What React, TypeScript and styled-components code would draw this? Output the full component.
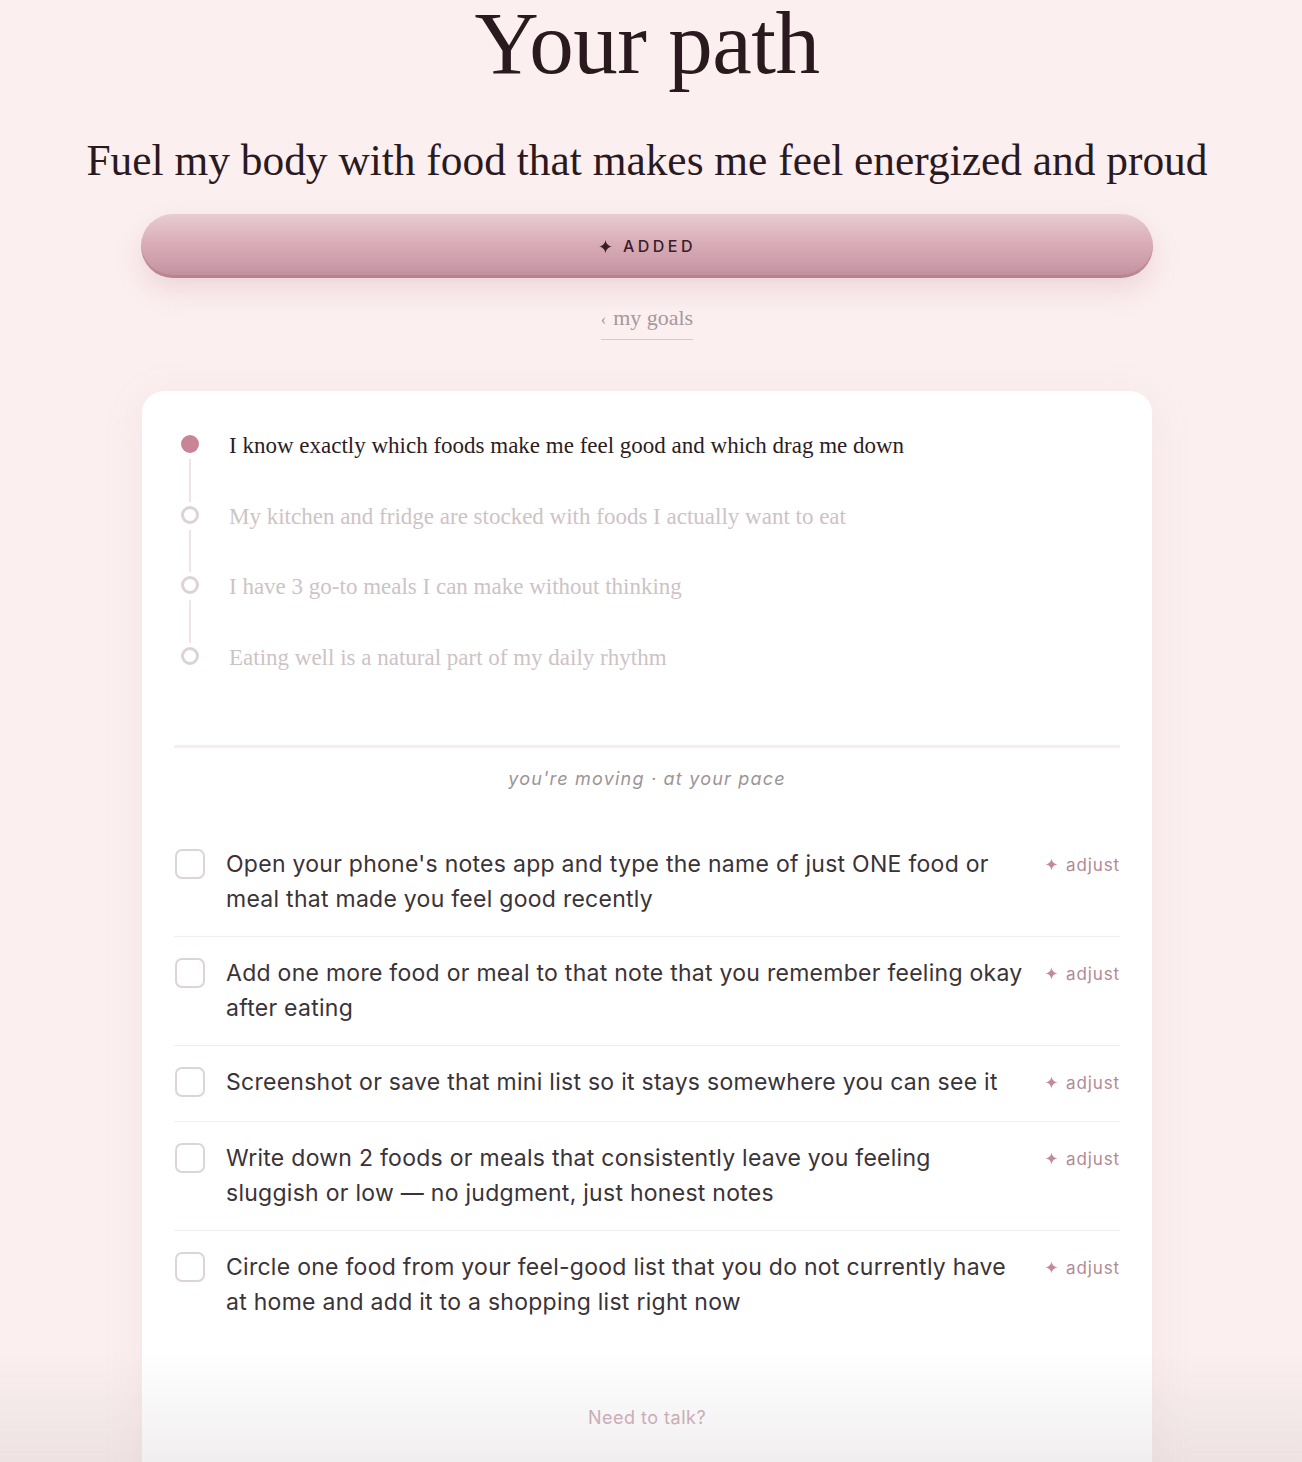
import styled, { createGlobalStyle } from 'styled-components'

const GlobalStyle = createGlobalStyle`
  * { box-sizing: border-box; }
  html, body {
    margin: 0;
    padding: 0;
    background: #fbefef;
  }
  body {
    font-family: Inter, "Noto Sans", sans-serif;
    color: #2b2226;
  }
`

const serif = `"Liberation Serif", "DejaVu Serif", serif`

const Page = styled.main`
  display: flex;
  flex-direction: column;
  align-items: center;
  min-height: 1462px;
  padding-right: 8px;
  overflow: hidden;
`

const Title = styled.h1`
  margin: 0;
  padding-top: 2px;
  font-family: ${serif};
  font-weight: 400;
  font-size: 89px;
  line-height: 82px;
  color: #2a1a1f;
  letter-spacing: -0.5px;
`

const Goal = styled.h2`
  margin: 50px 0 0;
  font-family: ${serif};
  font-weight: 400;
  font-size: 43.4px;
  line-height: 53px;
  color: #2a1a1f;
  white-space: nowrap;
`

const AddedButton = styled.button`
  margin-top: 27px;
  width: 1012px;
  height: 64px;
  border: none;
  border-radius: 32px;
  background: linear-gradient(180deg, #e9ccd3 0%, #d9adb8 45%, #c998a6 85%, #bf8d9b 100%);
  box-shadow: 0 12px 26px rgba(190, 130, 145, 0.22), inset 0 -3px 0 rgba(170, 110, 128, 0.35);
  display: flex;
  align-items: center;
  justify-content: center;
  gap: 10px;
  font-family: Inter, sans-serif;
  font-size: 16px;
  font-weight: 500;
  letter-spacing: 3.5px;
  color: #3a1d29;
  cursor: pointer;
`

const BackLink = styled.a`
  margin-top: 26px;
  padding-bottom: 6px;
  border-bottom: 1px solid #d9c9ce;
  font-family: ${serif};
  font-size: 22px;
  line-height: 27px;
  color: #a8979d;
  text-decoration: none;
  display: flex;
  align-items: baseline;
  gap: 7px;
`

const Chevron = styled.span`
  font-size: 16px;
`

const Card = styled.section`
  margin-top: 51px;
  width: 1010px;
  background: #ffffff;
  border-radius: 22px;
  box-shadow: 0 8px 40px rgba(210, 160, 170, 0.12);
  padding: 44px 32px 160px;
`

const Timeline = styled.ol`
  list-style: none;
  margin: 0;
  padding: 0;
`

const Milestone = styled.li`
  display: flex;
  align-items: stretch;
  gap: 23px;
  height: 70.7px;
`

const Marker = styled.div`
  width: 32px;
  display: flex;
  flex-direction: column;
  align-items: center;
`

const Dot = styled.span<{ $active?: boolean }>`
  width: 18px;
  height: 18px;
  flex: none;
  border-radius: 50%;
  background: ${p => (p.$active ? '#c98598' : '#fff')};
  border: ${p => (p.$active ? 'none' : '3px solid #ddd3d6')};
`

const Connector = styled.span<{ $hidden?: boolean }>`
  flex: 1;
  width: 2px;
  margin: 6px 0 4px;
  background: ${p => (p.$hidden ? 'transparent' : '#efe5e8')};
`

const MilestoneText = styled.span<{ $active?: boolean }>`
  margin-top: 2px;
  font-family: ${serif};
  font-size: 23px;
  line-height: 18px;
  color: ${p => (p.$active ? '#2b1d22' : '#cdc3c6')};
`

const Divider = styled.hr`
  margin: 27px 0 0;
  border: none;
  height: 3px;
  background: #f5edef;
`

const PaceNote = styled.p`
  margin: 19px 0 0;
  text-align: center;
  font-style: italic;
  font-size: 18px;
  line-height: 24px;
  letter-spacing: 1.2px;
  color: #9c9498;
`

const Tasks = styled.ul`
  list-style: none;
  margin: 37px 0 0;
  padding: 0;
`

const Task = styled.li`
  display: flex;
  align-items: flex-start;
  gap: 20px;
  min-height: 76px;
  padding: 19px 0;
  border-bottom: 1px solid #f3edef;
  &:last-child { border-bottom: none; }
`

const Checkbox = styled.span`
  flex: none;
  width: 30px;
  height: 30px;
  margin: 2px 1px 0;
  border: 2px solid #ddd4d7;
  border-radius: 7px;
  background: #fff;
`

const TaskText = styled.span`
  flex: 1;
  font-size: 23px;
  line-height: 35px;
  letter-spacing: 0.27px;
  color: #3a3337;
`

const Adjust = styled.span`
  flex: none;
  display: flex;
  align-items: center;
  gap: 8px;
  margin-top: 7px;
  font-size: 17px;
  line-height: 22px;
  letter-spacing: 0.9px;
  color: #b28996;
`

const TalkLink = styled.p`
  margin: 67px 0 0;
  text-align: center;
  font-size: 18px;
  line-height: 24px;
  letter-spacing: 0.5px;
  color: #caaab5;
`

const BottomFade = styled.div`
  position: fixed;
  left: 0;
  right: 0;
  bottom: 0;
  height: 110px;
  pointer-events: none;
  background: linear-gradient(180deg, rgba(200, 195, 195, 0) 0%, rgba(200, 190, 192, 0.26) 100%);
`

const Sparkle = ({ size, color }: { size: number; color: string }) => (
  <svg width={size} height={size} viewBox="0 0 24 24" fill={color}>
    <path d="M12 1c.6 6.2 4.8 10.4 11 11-6.2.6-10.4 4.8-11 11-.6-6.2-4.8-10.4-11-11 6.2-.6 10.4-4.8 11-11z" />
  </svg>
)

const milestones = [
  'I know exactly which foods make me feel good and which drag me down',
  'My kitchen and fridge are stocked with foods I actually want to eat',
  'I have 3 go-to meals I can make without thinking',
  'Eating well is a natural part of my daily rhythm',
]

const steps = [
  "Open your phone's notes app and type the name of just ONE food or meal that made you feel good recently",
  'Add one more food or meal to that note that you remember feeling okay after eating',
  'Screenshot or save that mini list so it stays somewhere you can see it',
  'Write down 2 foods or meals that consistently leave you feeling sluggish or low — no judgment, just honest notes',
  'Circle one food from your feel-good list that you do not currently have at home and add it to a shopping list right now',
]

export default function App() {
  return (
    <>
      <GlobalStyle />
      <Page>
        <Title>Your path</Title>
        <Goal>Fuel my body with food that makes me feel energized and proud</Goal>
        <AddedButton>
          <Sparkle size={15} color="#3a1d29" />
          ADDED
        </AddedButton>
        <BackLink href="#">
          <Chevron>‹</Chevron>
          my goals
        </BackLink>

        <Card>
          <Timeline>
            {milestones.map((m, i) => (
              <Milestone key={m}>
                <Marker>
                  <Dot $active={i === 0} />
                  <Connector $hidden={i === milestones.length - 1} />
                </Marker>
                <MilestoneText $active={i === 0}>{m}</MilestoneText>
              </Milestone>
            ))}
          </Timeline>

          <Divider />
          <PaceNote>you're moving · at your pace</PaceNote>

          <Tasks>
            {steps.map(s => (
              <Task key={s}>
                <Checkbox />
                <TaskText>{s}</TaskText>
                <Adjust>
                  <Sparkle size={13} color="#c48a9c" />
                  adjust
                </Adjust>
              </Task>
            ))}
          </Tasks>

          <TalkLink>Need to talk?</TalkLink>
        </Card>
      </Page>
      <BottomFade />
    </>
  )
}
